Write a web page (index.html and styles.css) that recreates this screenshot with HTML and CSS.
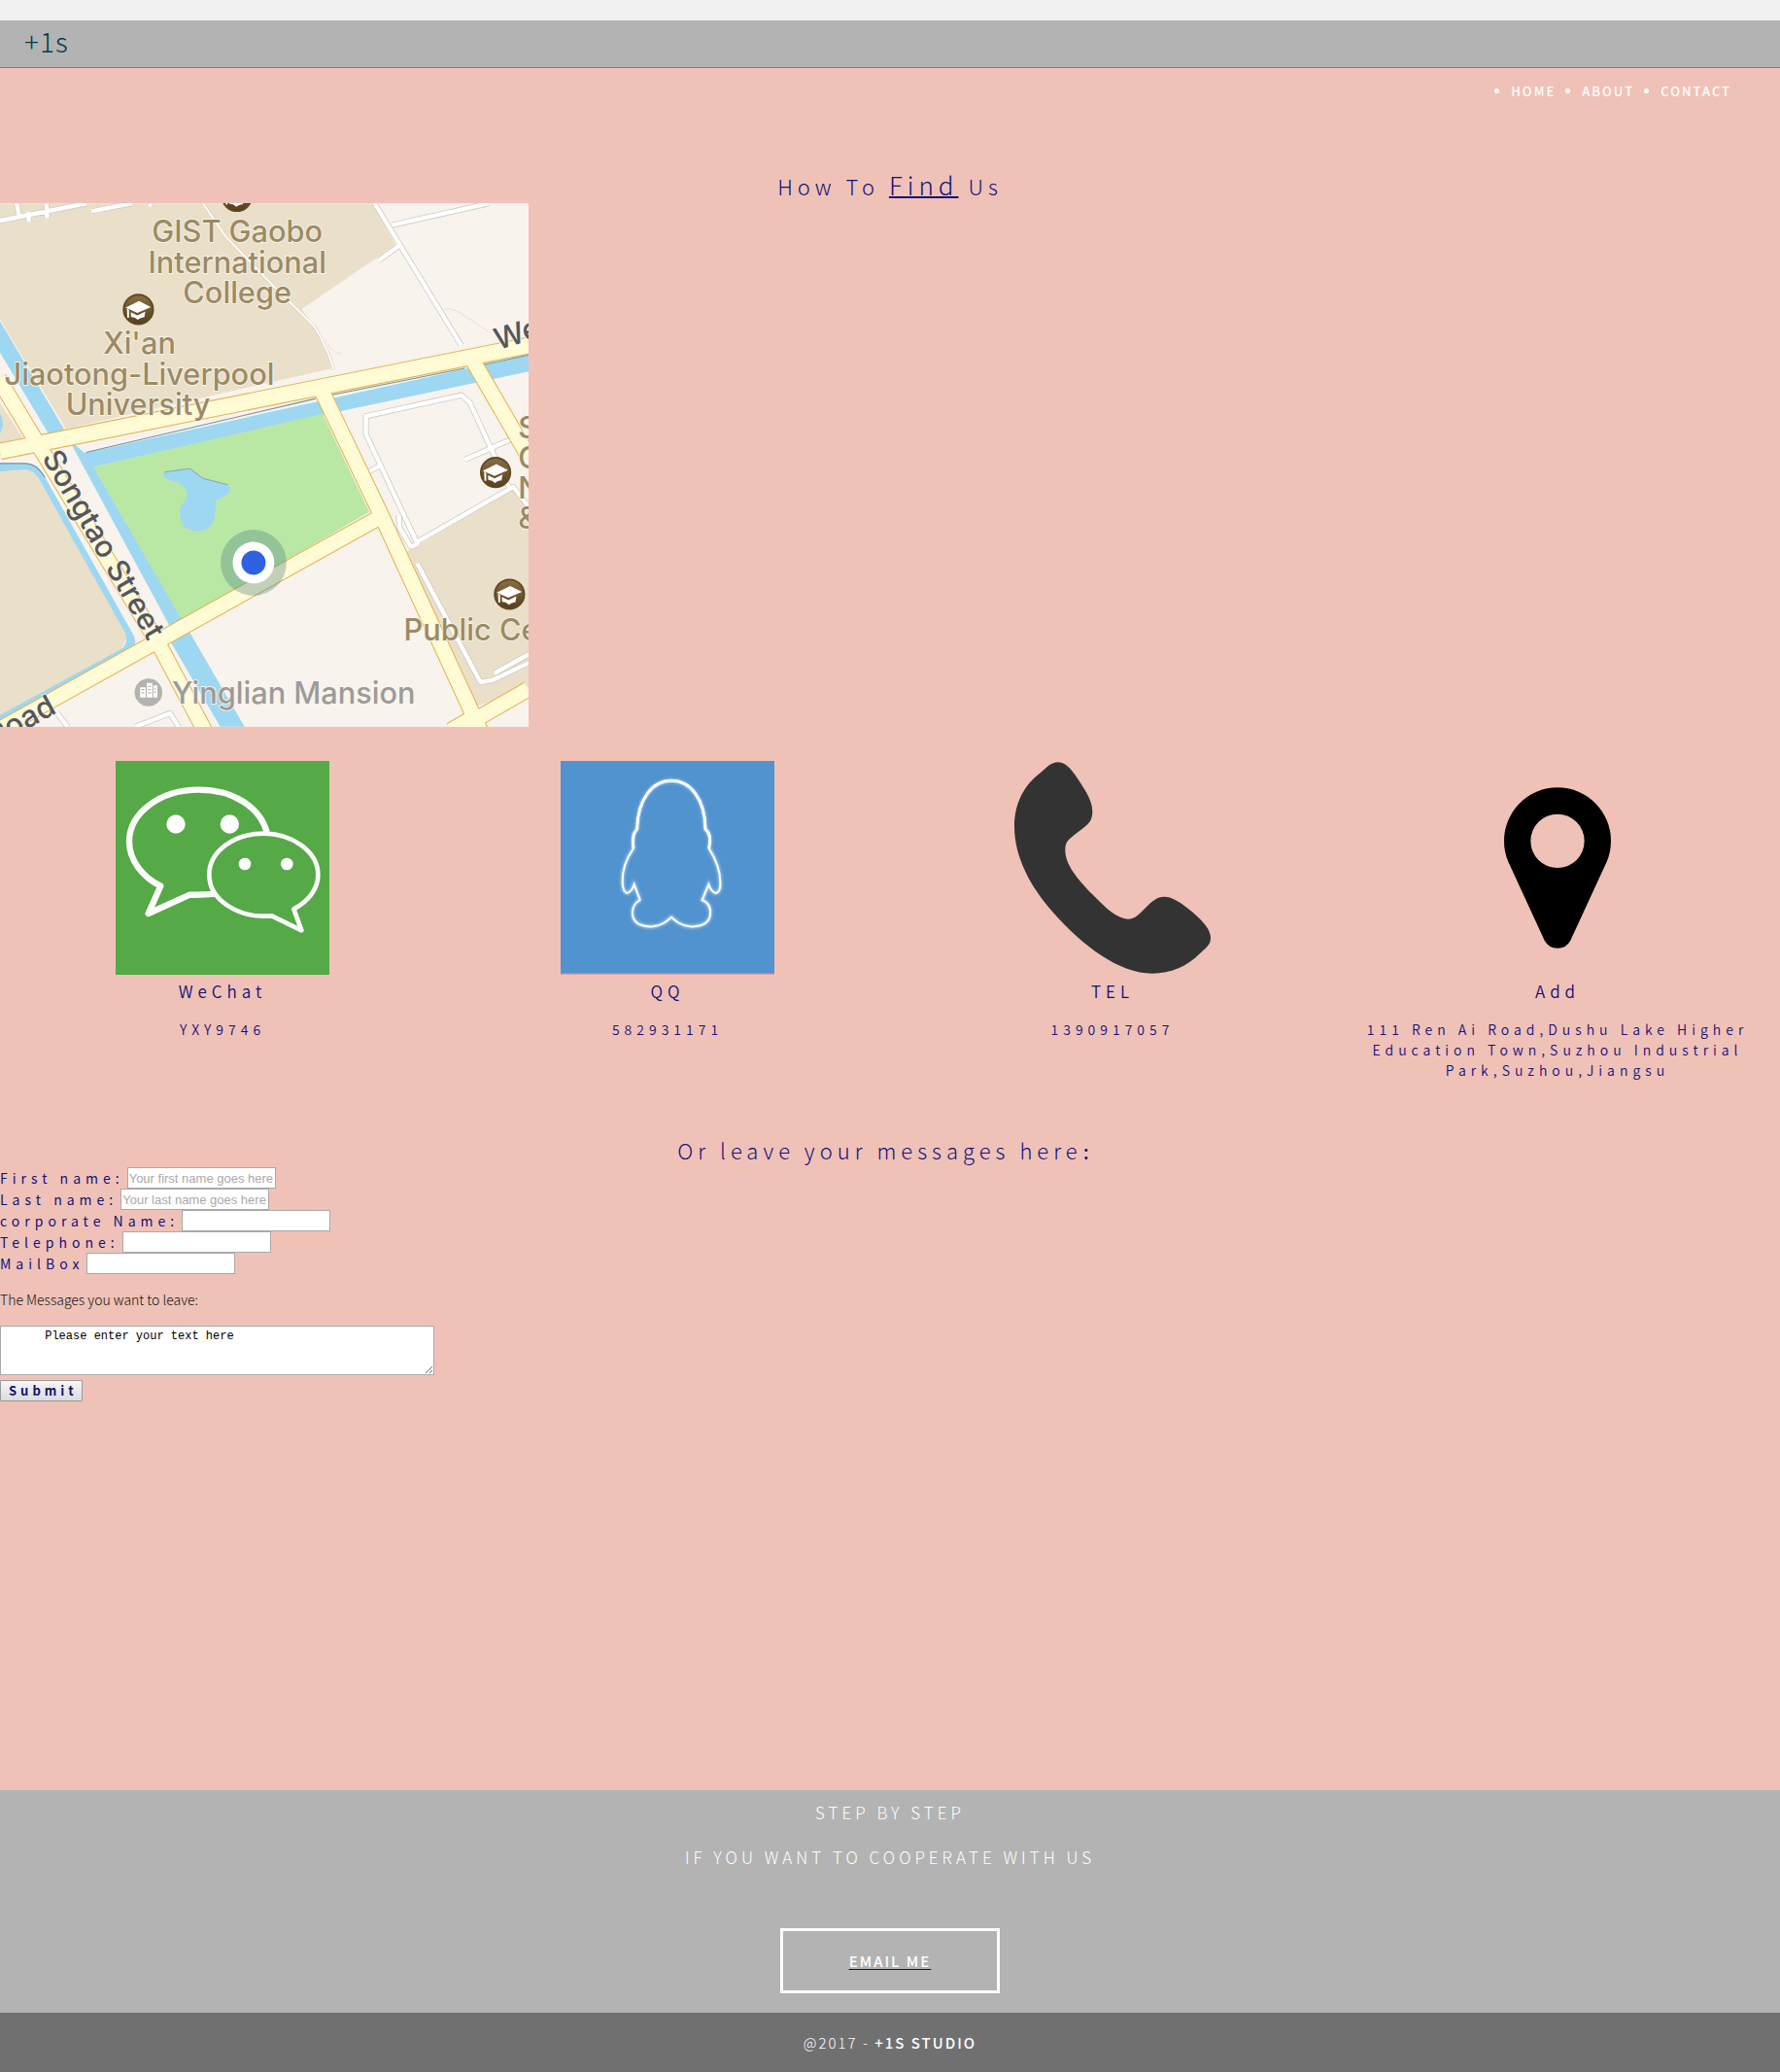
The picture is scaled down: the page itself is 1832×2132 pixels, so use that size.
FILE: index.html
```html
<!DOCTYPE html>
<html lang="en">
<head>
<meta charset="utf-8">
<title>+1s Studio - Contact</title>
<link rel="stylesheet" href="styles.css">
</head>
<body>
<header class="brand-bar"><span class="brand">+1s</span></header>
<main class="content">
  <nav>
    <ul class="menu">
      <li><a href="#home">HOME</a></li>
      <li><a href="#about">ABOUT</a></li>
      <li><a href="#contact">CONTACT</a></li>
    </ul>
  </nav>

  <h1 class="title">How To <span class="title-accent">Find</span> Us</h1>

  <svg class="map" viewBox="0 25 1524 1509" role="img" aria-label="Map of the studio location">
    <defs>
      <linearGradient id="brown" x1="0" y1="0" x2="0" y2="1"><stop offset="0" stop-color="#8a6d42"/><stop offset="1" stop-color="#59401c"/></linearGradient>
      <g id="college">
        <circle r="45" fill="#5d4725"/><circle r="40" fill="url(#brown)"/>
        <path d="M-37-5L2-24 36-7-3 10zM-22 8L-3 17 20 6 17 23Q8 22 -2 30-10 21-21 22zM-33-3L-27 2V24H-32z" fill="#fff"/>
      </g>
    </defs>
    <rect y="25" width="1524" height="1509" fill="#f8f4ed"/>
    <g fill="#eadfc8">
      <path d="M0 25H1075L1140 145 870 330 905 380 962 500 190 675 0 360z"/>
      <path d="M0 600L65 700 0 715zM0 785H75L105 810 370 1270 350 1310 0 1510z"/>
      <path d="M1172 1030L1480 850 1524 905V1425L1370 1475 1190 1075z"/>
    </g>
    <path d="M0 75L250 25M48 25L55 60M80 50L84 78M134 25L136 68M264 48L380 25M433 25V34M1080 25L1330 435M1130 88L1410 25M1150 148L1092 190M1050 640L1330 578 1355 600 1470 850M1055 635V690L1205 1010M1055 803L1098 780M1340 764L1470 707M1205 1000L1480 842 1524 900M1150 925L1152 960 1185 1015 1205 1008M1203 1063L1385 1405 1420 1400 1524 1350M1425 1380L1524 1325M165 1495L195 1534M390 1534L490 1495 515 1534" fill="none" stroke="#d0cdc8" stroke-width="17" stroke-linejoin="round"/>
    <path d="M0 75L250 25M48 25L55 60M80 50L84 78M134 25L136 68M264 48L380 25M433 25V34M1080 25L1330 435M1130 88L1410 25M1150 148L1092 190M1050 640L1330 578 1355 600 1470 850M1055 635V690L1205 1010M1055 803L1098 780M1340 764L1470 707M1205 1000L1480 842 1524 900M1150 925L1152 960 1185 1015 1205 1008M1203 1063L1385 1405 1420 1400 1524 1350M1425 1380L1524 1325M165 1495L195 1534M390 1534L490 1495 515 1534" fill="none" stroke="#fff" stroke-width="12" stroke-linejoin="round"/>
    <path d="M585 25L650 120 780 255 905 378Q945 440 962 505" fill="none" stroke="#d0c8b8" stroke-width="9"/>
    <path d="M585 25L650 120 780 255 905 378Q945 440 962 505" fill="none" stroke="#fffdf7" stroke-width="6"/>
    <path d="M1280 330Q1310 325 1340 350L1410 395M945 430Q960 458 985 458" fill="none" stroke="#ddd8d0" stroke-width="2"/>
    <g fill="#9ed7f2">
      <path d="M0 365L190 685 215 720 245 745 1524 462V510L930 635 270 785 705 1534H635L200 790 140 690 0 455z"/>
      <path d="M0 775H75Q105 775 130 815L385 1270Q395 1290 385 1310L30 1520 0 1534V1500L350 1310Q370 1295 362 1265L115 825Q100 795 75 792L0 798z"/>
      <path d="M0 632Q16 660 0 690z"/>
    </g>
    <path d="M148 718H205L490 1245 440 1290z" fill="#f8f4ed"/>
    <path d="M248 743L910 588M958 577L1340 501M1390 491L1524 462M0 775H75Q105 775 130 815" fill="none" stroke="#6f8f9c" stroke-width="3"/>
    <path d="M270 785L930 632 1065 915 525 1228z" fill="#b9e8a4"/>
    <path d="M468 803Q485 795 550 790L585 818 660 836Q670 855 655 865L625 880 618 935Q605 970 570 970 530 968 523 945L518 905 540 870Q540 840 510 828 475 825 468 803z" fill="#9ed7f2"/>
    <path d="M475 800Q500 796 548 790L585 818 656 836" fill="none" stroke="#6f8f9c" stroke-width="2"/>
    <g fill="none" stroke="#e5b456">
      <path d="M0 740L1524 435" stroke-width="50"/>
      <path d="M-5 530L460 1300 590 1545M920 550L1095 915 1385 1545M1350 455L1524 755M0 1540L1095 930M1385 1495L1300 1545M1385 1505L1524 1425" stroke-width="48"/>
    </g>
    <g fill="none" stroke="#fffbd5">
      <path d="M0 740L1524 435" stroke-width="44"/>
      <path d="M-5 530L460 1300 590 1545M920 550L1095 915 1385 1545M1350 455L1524 755M0 1540L1095 930M1385 1495L1300 1545M1385 1505L1524 1425" stroke-width="42"/>
    </g>
    <use href="#college" x="399" y="331"/>
    <use href="#college" x="683" y="5"/>
    <use href="#college" x="1429" y="801"/>
    <use href="#college" x="1469" y="1152"/>
    <circle cx="731" cy="1061" r="95" fill="#4c8280" opacity=".35"/>
    <circle cx="731" cy="1061" r="60" fill="#fff"/>
    <circle cx="731" cy="1061" r="35" fill="#2e62e0"/>
    <circle cx="428" cy="1435" r="40" fill="#b4b2b0"/>
    <path d="M404 1420h16v30h-16zM423 1408h16v42h-16zM442 1415h12v35h-12z" fill="#fff"/>
    <path d="M408 1427h8m-8 9h8m11-18h8m-8 9h8m-8 9h8m9-11h6m-6 9h6" stroke="#b4b2b0" stroke-width="3"/>
    <g class="place" text-anchor="middle">
      <text x="684" y="137">GIST Gaobo</text>
      <text x="684" y="226">International</text>
      <text x="684" y="313">College</text>
      <text x="402" y="459">Xi'an</text>
      <text x="402" y="547">Jiaotong-Liverpool</text>
      <text x="398" y="635">University</text>
    </g>
    <g class="place">
      <text x="1164" y="1285">Public Ce</text>
      <text x="1494" y="703">S</text>
      <text x="1494" y="790">C</text>
      <text x="1494" y="876">N</text>
      <text x="1494" y="963">&amp;</text>
    </g>
    <text class="place place-grey" x="496" y="1467">Yinglian Mansion</text>
    <g class="place street">
      <text transform="translate(120 758) rotate(60)">Songtao Street</text>
      <text transform="translate(1436 448) rotate(-17)">We</text>
      <text transform="translate(166 1492) rotate(-29)" text-anchor="end">Road</text>
    </g>
  </svg>

  <section class="contacts">
    <article class="contact">
      <svg class="contact-icon" viewBox="0 0 660 660" aria-hidden="true">
        <rect width="660" height="660" fill="#55a946"/>
        <g fill="none" stroke="#fcfcfc" stroke-linejoin="round">
          <path d="M467 220C445 140 360 89 257 89 137 89 42 160 42 249 42 305 82 358 139 386L101 471 229 413Q270 414 310 410" stroke-width="19"/>
          <path d="M457 224C545 224 625 280 625 351 625 395 596 433 550 457L574 523 482 478C380 487 289 430 289 351 289 280 365 224 457 224z" stroke-width="14"/>
        </g>
        <g fill="#fff"><circle cx="186" cy="195" r="29"/><circle cx="352" cy="195" r="29"/><circle cx="399" cy="318" r="19"/><circle cx="529" cy="318" r="19"/></g>
      </svg>
      <h2 class="contact-name">WeChat</h2>
      <p class="contact-value">YXY9746</p>
    </article>
    <article class="contact">
      <svg class="contact-icon" viewBox="0 0 660 660" aria-hidden="true">
        <defs><filter id="glow" x="-10%" y="-10%" width="120%" height="120%"><feGaussianBlur stdDeviation="5"/></filter>
        <path id="penguin" d="M342 61C285 61 238 115 236 210 224 222 221 245 225 270 200 305 190 345 191 375 193 403 200 409 208 407 216 403 223 393 227 381L245 429C222 442 220 465 223 480 229 505 258 513 285 511 312 508 325 497 342 482 359 497 372 508 399 511 426 513 455 505 461 480 465 460 462 440 437 429L457 381C461 393 468 403 476 407 486 410 494 400 493 375 493 345 485 312 458 270 464 245 461 222 447 210 446 115 399 61 342 61z"/></defs>
        <rect width="660" height="660" fill="#5193cf"/>
        <rect y="654" width="660" height="3" fill="#8c8fd8"/><rect y="657" width="660" height="3" fill="#e59ba0"/>
        <use href="#penguin" fill="none" stroke="#a4c8ec" stroke-width="11" filter="url(#glow)"/>
        <use href="#penguin" fill="none" stroke="#fff" stroke-width="6"/>
        <path d="M342 61C285 61 238 115 236 210 224 222 221 245 225 270M458 270C464 245 461 222 447 210 446 115 399 61 342 61" fill="none" stroke="#fff" stroke-width="9"/>
      </svg>
      <h2 class="contact-name">QQ</h2>
      <p class="contact-value">582931171</p>
    </article>
    <article class="contact">
      <svg class="contact-icon" viewBox="0 0 660 660" aria-hidden="true">
        <path d="M107 37C127 20 140 4 162 4 190 4 209 33 239 80 257 108 268 132 268 155 268 188 255 194 223 220 195 242 184 248 184 275 184 320 222 364 268 412 308 454 346 488 377 488 401 488 412 472 433 452 453 433 466 419 490 419 517 419 549 443 576 466 611 496 633 521 633 546 633 569 618 577 597 597 559 634 510 656 453 656 350 656 240 572 147 468 74 386 27 294 27 202 27 131 57 75 107 37z" fill="#333"/>
      </svg>
      <h2 class="contact-name">TEL</h2>
      <p class="contact-value">1390917057</p>
    </article>
    <article class="contact">
      <svg class="contact-icon" viewBox="0 0 660 660" aria-hidden="true">
        <path d="M330 82A165 165 0 0 1 495 247Q495 282 482 311L370 554Q357 578 330 578 303 578 290 554L178 311Q165 282 165 247A165 165 0 0 1 330 82zM330 164A83 83 0 1 0 330 330 83 83 0 1 0 330 164z" fill="#000"/>
      </svg>
      <h2 class="contact-name">Add</h2>
      <p class="contact-value">111 Ren Ai Road,Dushu Lake Higher Education Town,Suzhou Industrial Park,Suzhou,Jiangsu</p>
    </article>
  </section>

  <h2 class="title">Or leave your messages here<span class="title-colon">：</span></h2>
  <form class="message-form">
    <div class="field"><label for="first">First name:</label><input id="first" type="text" placeholder="Your first name goes here"></div>
    <div class="field"><label for="last">Last name:</label><input id="last" type="text" placeholder="Your last name goes here"></div>
    <div class="field"><label for="company">corporate Name:</label><input id="company" type="text"></div>
    <div class="field"><label for="phone">Telephone:</label><input id="phone" type="text"></div>
    <div class="field"><label for="mail">MailBox</label><input id="mail" type="text"></div>
    <label class="message-label" for="message">The Messages you want to leave:</label>
    <textarea id="message" class="message">      Please enter your text here</textarea>
    <button class="submit" type="submit">Submit</button>
  </form>
</main>
<footer>
  <section class="cooperate">
    <p>STEP BY STEP</p>
    <p>IF YOU WANT TO COOPERATE WITH US</p>
    <a class="email" href="#email">EMAIL ME</a>
  </section>
  <p class="copyright">@2017 - <strong>+1S STUDIO</strong></p>
</footer>
</body>
</html>
```
FILE: styles.css
```css
* { box-sizing: border-box; }

body {
  margin: 0;
  padding-top: 21px;
  background: #f1f1f1;
  color: #10107c;
  font-family: "Noto Sans CJK SC", "Noto Sans", sans-serif;
  font-weight: 300;
}

h1, h2, p { margin: 0; font-weight: 300; }

.brand-bar {
  height: 49px;
  padding-left: 25px;
  background: #b3b3b3;
  border-bottom: 1px solid #3a97ab;
  color: #003c50;
  font-size: 28px;
  line-height: 42px;
  letter-spacing: 1px;
}

.content {
  padding-bottom: 400px;
  background: #f0c2b7;
}

.menu {
  display: flex;
  justify-content: flex-end;
  gap: 27px;
  margin: 0;
  padding: 14px 50px 0 0;
  font-size: 13px;
  line-height: 20px;
  letter-spacing: 2px;
  color: #fff;
}

.menu a { color: #fff; font-weight: 500; text-decoration: none; }

.title {
  font-size: 22px;
  line-height: 36px;
  letter-spacing: 5px;
  text-align: center;
}

h1.title { padding-top: 69px; }

.title-accent {
  font-size: 26px;
  line-height: 1;
  text-decoration: underline;
  text-decoration-thickness: 2px;
}

.title-colon { font-size: 16px; font-weight: 700; line-height: 1; }

.map { display: block; width: 544px; height: 539px; }

.place {
  fill: #9c8a62;
  stroke: #f8f4ed;
  stroke-width: 5px;
  paint-order: stroke;
  font: 500 86px Inter, sans-serif;
}

.place-grey { fill: #9c9a98; }

.street { fill: #55565a; }

.contacts {
  display: grid;
  grid-template-columns: repeat(4, 1fr);
  padding: 35px 0 53px;
}

.contact { padding: 0 20px; text-align: center; }

.contact-icon { display: block; width: 220px; height: 220px; margin: 0 auto; }

.contact-name {
  margin-bottom: 12px;
  font-size: 17px;
  font-weight: 350;
  line-height: 34px;
  letter-spacing: 5px;
}

.contact-value {
  font-size: 14px;
  font-weight: 350;
  line-height: 21px;
  letter-spacing: 5px;
}

.field {
  display: flex;
  align-items: center;
  gap: 3px;
  height: 22px;
  font-size: 14px;
  letter-spacing: 5px;
}

.field label { font-weight: 400; }

.field input {
  width: 153px;
  height: 22px;
  padding: 1px;
  border: 1px solid #a9a9a9;
  background: #fff;
  font: 13px "Liberation Sans", sans-serif;
}

.field input::placeholder { color: #a9a9a9; }

.message-label {
  display: block;
  margin: 16px 0;
  color: #111;
  font-size: 14px;
  line-height: 21px;
}

.message {
  display: block;
  width: 447px;
  height: 51px;
  padding: 2px;
  border: 1px solid #a9a9a9;
  font: 12px/16px "Liberation Mono", monospace;
}

.submit {
  display: block;
  height: 22px;
  margin-top: 5px;
  padding: 0 4px 0 8px;
  border: 1px solid #999;
  border-radius: 1px;
  background: linear-gradient(#f6f6f6, #dcdcdc);
  color: #10107c;
  font: 700 13px/18px "Noto Sans CJK SC", sans-serif;
  letter-spacing: 4px;
}

.cooperate {
  display: flex;
  flex-direction: column;
  align-items: center;
  padding: 0 0 20px;
  background: #b3b3b3;
  color: #fff;
  font-size: 17px;
  line-height: 46px;
  letter-spacing: 4px;
}

.email {
  width: 226px;
  margin-top: 50px;
  border: 3px solid #fff;
  color: #fff;
  font-size: 15px;
  font-weight: 500;
  line-height: 61px;
  letter-spacing: 2px;
  text-align: center;
  text-decoration: underline 1px #00c;
  text-underline-offset: 2px;
}

.copyright {
  background: #707070;
  color: #fff;
  font-size: 15px;
  line-height: 61px;
  letter-spacing: 2px;
  text-align: center;
}

.copyright strong { font-weight: 500; }
```
